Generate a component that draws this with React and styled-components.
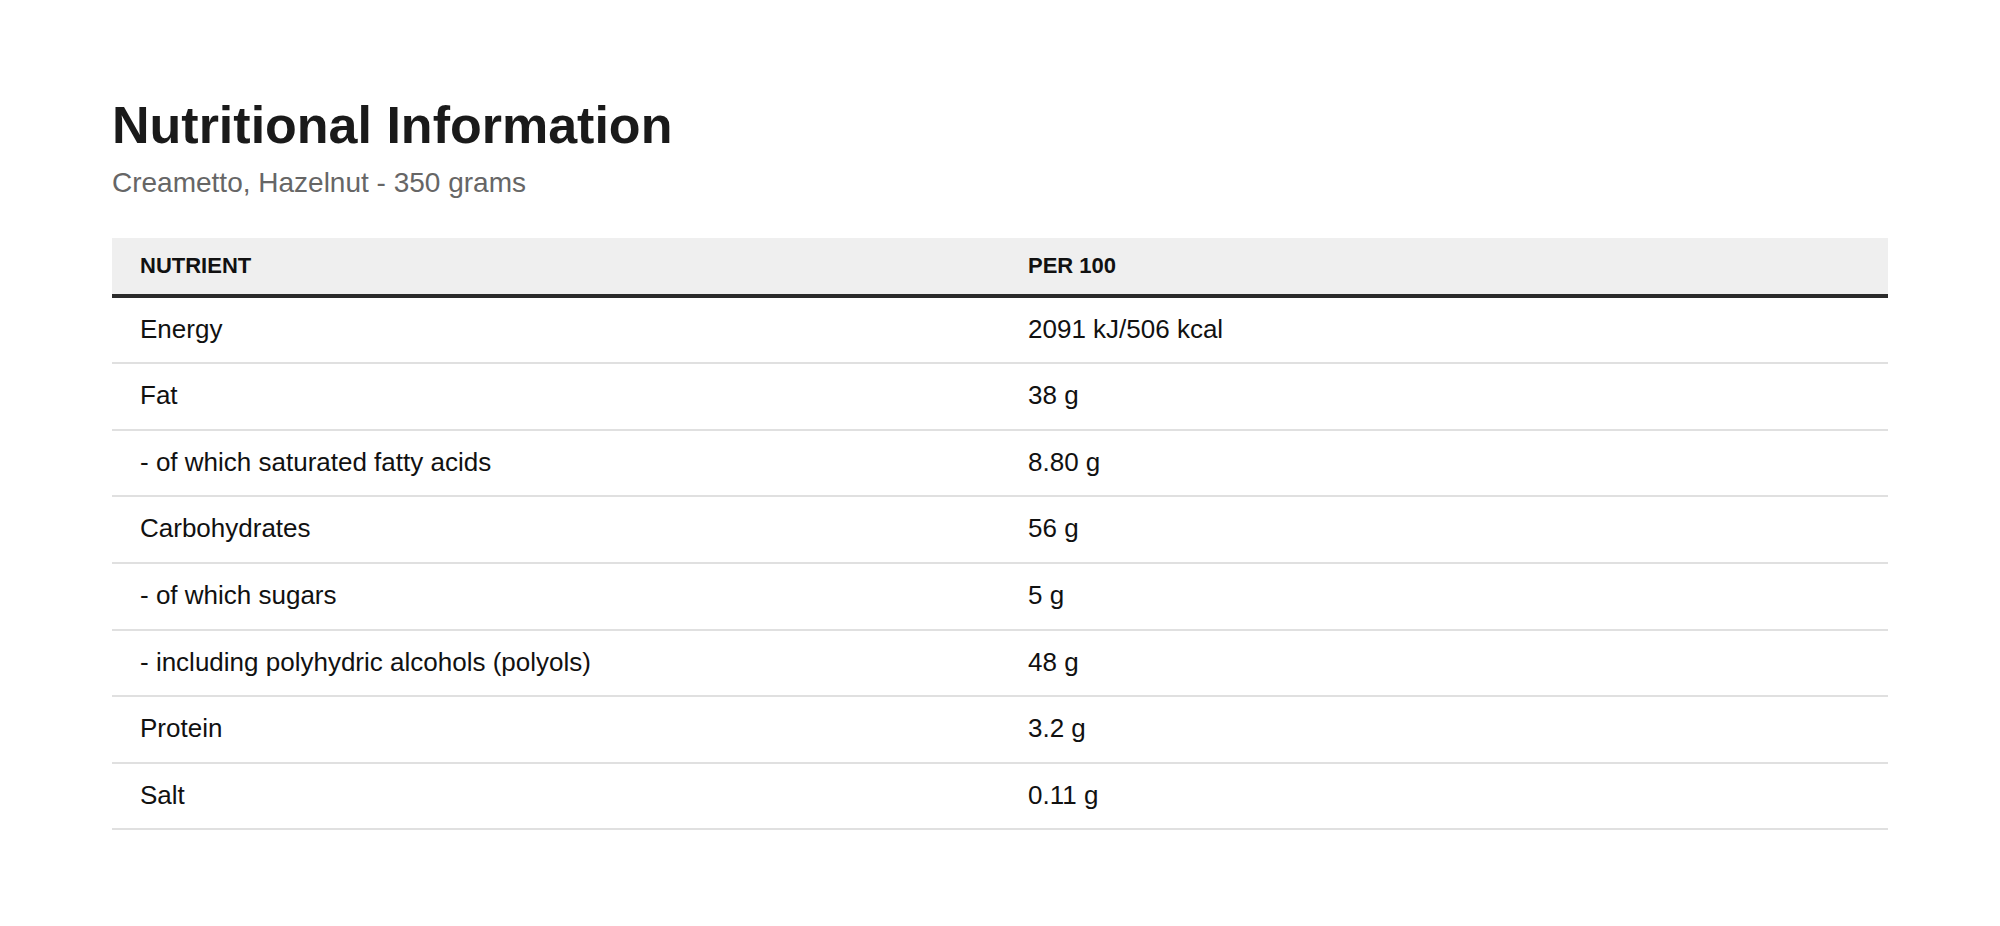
import React from "react";
import styled, {createGlobalStyle} from "styled-components";

const GlobalStyle = createGlobalStyle`
  body {
    margin: 0;
    background: #fff;
    font-family: "Liberation Sans", Arial, sans-serif;
    color: #111;
  }
`;

const rows = [
  {name: "Energy", value: "2091 kJ/506 kcal"},
  {name: "Fat", value: "38 g"},
  {name: "- of which saturated fatty acids", value: "8.80 g"},
  {name: "Carbohydrates", value: "56 g"},
  {name: "- of which sugars", value: "5 g"},
  {name: "- including polyhydric alcohols (polyols)", value: "48 g"},
  {name: "Protein", value: "3.2 g"},
  {name: "Salt", value: "0.11 g"},
];

const App = () => {
  return (
    <Page>
      <GlobalStyle />
      <Title>Nutritional Information</Title>
      <Subtitle>Creametto, Hazelnut - 350 grams</Subtitle>
      <Table>
        <thead>
          <tr>
            <Th>Nutrient</Th>
            <Th>Per 100</Th>
          </tr>
        </thead>
        <tbody>
          {rows.map((row) => (
            <Row key={row.name}>
              <Td>{row.name}</Td>
              <Td>{row.value}</Td>
            </Row>
          ))}
        </tbody>
      </Table>
    </Page>
  );
};

const Page = styled.div`
  padding: 94px 112px 80px;
`;
const Title = styled.h1`
  margin: 0;
  font-size: 52px;
  line-height: 1.2;
  font-weight: 700;
  color: #1a1a1a;
`;
const Subtitle = styled.p`
  margin: 7px 0 0;
  font-size: 28px;
  line-height: 1.4;
  color: #666;
`;
const Table = styled.table`
  width: 100%;
  margin-top: 35px;
  border-collapse: collapse;
  table-layout: fixed;
`;
const Th = styled.th`
  text-align: left;
  background: #efefef;
  padding: 0 28px;
  height: 56px;
  font-size: 22px;
  font-weight: 700;
  text-transform: uppercase;
  color: #111;
  border-bottom: 4px solid #2a2a2a;
`;
const Row = styled.tr`
  border-bottom: 2px solid #e0e0e0;
`;
const Td = styled.td`
  padding: 13px 28px 15px;
  font-size: 26px;
  line-height: 36.6px;
  color: #111;
`;

export default App;
